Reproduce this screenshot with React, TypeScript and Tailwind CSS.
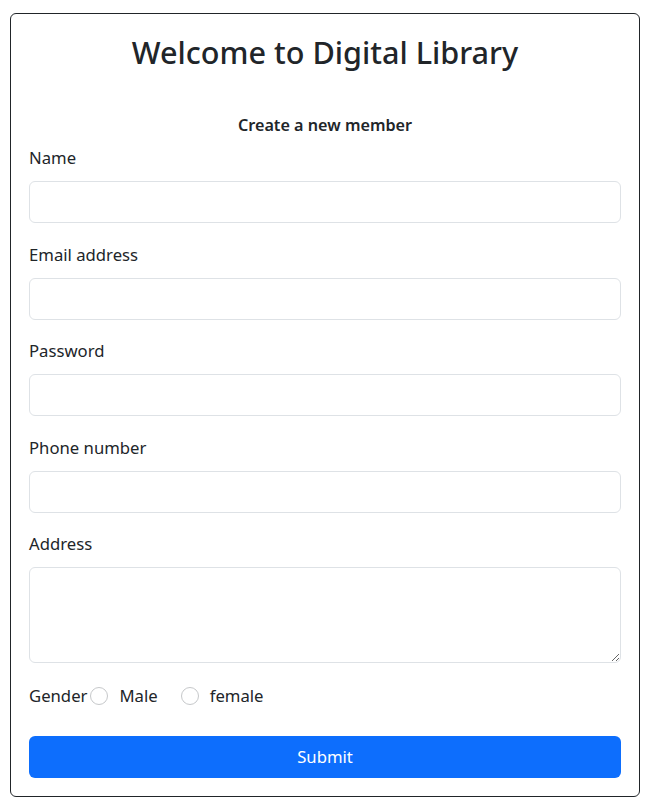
import React from "react";

const fields = [
  { label: "Name", type: "text" },
  { label: "Email address", type: "email" },
  { label: "Password", type: "password" },
  { label: "Phone number", type: "tel" },
];

export default function App() {
  return (
    <div
      className="min-h-screen bg-white pt-[13px] pl-[10px] text-[#212529]"
      style={{ fontFamily: '"Noto Sans", "Open Sans", sans-serif' }}
    >
      <div className="w-[630px] rounded-[6px] border border-[#212529] px-[18px] pt-[17px] pb-[18px] text-[16.7px]">
        <h1 className="text-center text-[30.6px] font-medium leading-[42px]">
          Welcome to Digital Library
        </h1>

        <form className="mt-[39px]">
          <p className="text-center text-[16.2px] font-semibold leading-[26px]">Create a new member</p>

          {fields.map((f, i) => (
            <div key={f.label} className={i === 0 ? "mt-[7px]" : "mt-[18.5px]"}>
              <label className="block leading-[26px]">{f.label}</label>
              <input
                type={f.type}
                className="mt-[10px] block h-[42px] w-full rounded-[6px] border border-[#dee2e6] px-[13px] outline-none"
              />
            </div>
          ))}

          <div className="mt-[18.5px]">
            <label className="block leading-[26px]">Address</label>
            <textarea className="mt-[10px] block h-[96px] w-full rounded-[6px] border border-[#dee2e6] px-[13px] py-[6px] outline-none" />
          </div>

          <div className="mt-[20px] flex items-center leading-[26px]">
            <span>Gender</span>
            <span className="ml-[3px] h-[18px] w-[18px] rounded-full border border-[#c6c8ca]" />
            <span className="ml-[11px]">Male</span>
            <span className="ml-[23px] h-[18px] w-[18px] rounded-full border border-[#c6c8ca]" />
            <span className="ml-[11px]">female</span>
          </div>

          <button
            type="button"
            className="mt-[27px] block h-[42px] w-full rounded-[6px] bg-[#0d6efd] text-white"
          >
            Submit
          </button>
        </form>
      </div>
    </div>
  );
}
